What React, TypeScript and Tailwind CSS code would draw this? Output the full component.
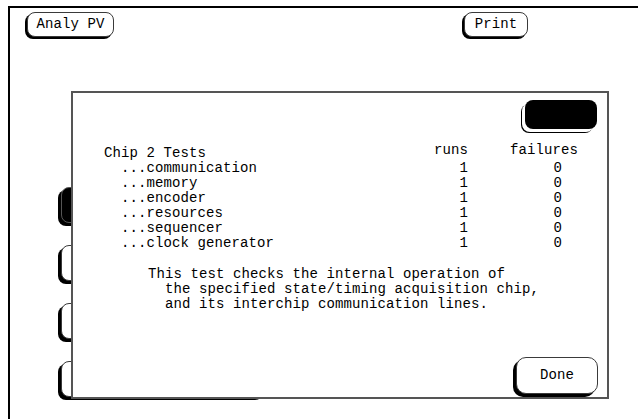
import React from 'react';

const tests = ['communication', 'memory', 'encoder', 'resources', 'sequencer', 'clock generator'];

const mono = "font-['Liberation_Mono',monospace] text-[14px] tracking-[0.1px] leading-[15px] text-black";

const Key: React.FC<{ label: string; className?: string }> = ({ label, className = '' }) => (
  <div
    className={`flex items-center justify-center rounded-[8px] border border-[#3a3a3a] bg-white shadow-[-2px_2px_0_0_#000] ${className}`}
  >
    {label}
  </div>
);

const App: React.FC = () => {
  return (
    <div className={`relative w-[638px] h-[419px] overflow-hidden bg-white ${mono}`}>
      {/* background screen */}
      <div className="ml-[8px] mt-[6px] h-[413px] border-l-2 border-t-2 border-black">
        <div className="flex pt-[4px]">
          <Key label="Analy PV" className="ml-[17px] w-[87px] h-[25px]" />
          <Key label="Print" className="ml-[350px] w-[64px] h-[25px]" />
        </div>

        <div className="ml-[51px] mt-[150px] flex flex-col gap-[22px]">
          <div className="w-[205px] h-[36px] rounded-[8px] border border-[#555] bg-black shadow-[-3px_3px_0_0_#000]" />
          <div className="w-[205px] h-[36px] rounded-[8px] border border-[#3a3a3a] bg-white shadow-[-3px_3px_0_0_#000]" />
          <div className="w-[205px] h-[36px] rounded-[8px] border border-[#3a3a3a] bg-white shadow-[-3px_3px_0_0_#000]" />
          <div className="w-[205px] h-[36px] rounded-[8px] border border-[#3a3a3a] bg-white shadow-[-3px_3px_0_0_#000]" />
        </div>
      </div>

      {/* test dialog */}
      <div className="absolute left-[71px] top-[91px] w-[538px] h-[308px] border-2 border-[#555] bg-white flex flex-col">
        <div className="flex justify-end pt-[7px] pr-[10px]">
          <div className="w-[72px] h-[29px] rounded-[8px] bg-black shadow-[-3px_3px_0_0_#fff,-4px_4px_0_0_#000]" />
        </div>

        <div className="flex mt-[14px]">
          <div className="w-[361px] pl-[31px] pt-[3px] whitespace-pre">
            <div>Chip 2 Tests</div>
            {tests.map(t => (
              <div key={t}>{`  ...${t}`}</div>
            ))}
          </div>
          <div className="w-[34px] text-right">
            <div className="h-[18px]">runs</div>
            {tests.map(t => (
              <div key={t}>1</div>
            ))}
          </div>
          <div className="ml-[42px] w-[68px] text-right">
            <div className="h-[18px]">failures</div>
            {tests.map(t => (
              <div key={t} className="pr-[16px]">0</div>
            ))}
          </div>
        </div>

        <div className="mt-[16px] pl-[75px] whitespace-pre">
          {'This test checks the internal operation of\n  the specified state/timing acquisition chip,\n  and its interchip communication lines.'}
        </div>

        <div className="mt-auto self-end mr-[9px] mb-[3px] flex items-center justify-center w-[82px] h-[37px] rounded-[10px] border border-[#3a3a3a] bg-white shadow-[-3px_3px_0_0_#000]">
          Done
        </div>
      </div>
    </div>
  );
};

export default App;
